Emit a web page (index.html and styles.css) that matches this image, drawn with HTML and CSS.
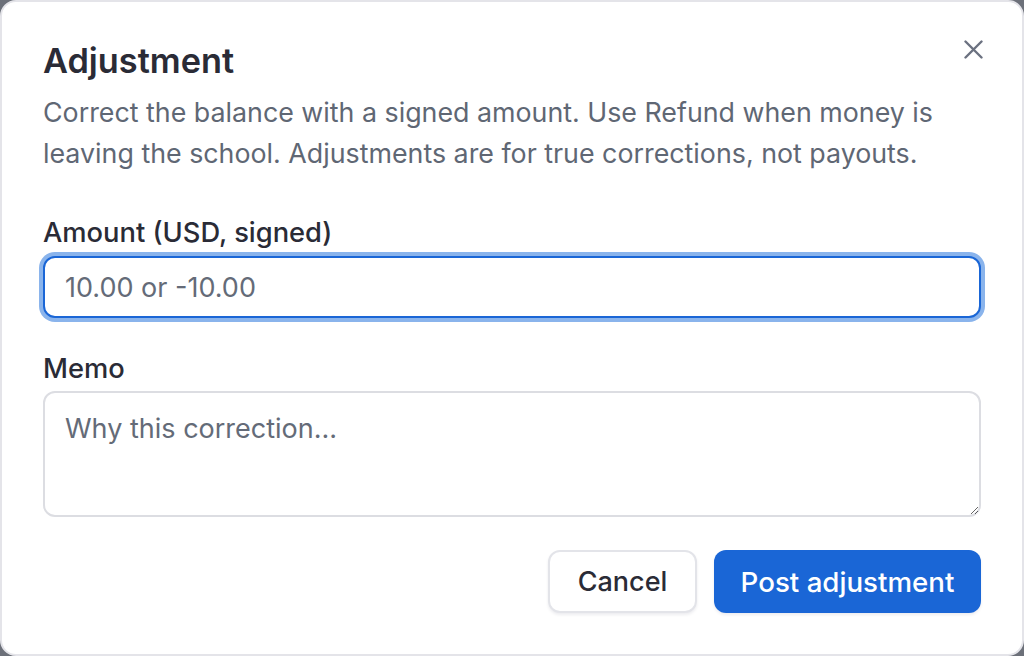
FILE: index.html
```html
<!DOCTYPE html>
<html lang="en">
<head>
<meta charset="utf-8">
<title>Adjustment</title>
<link rel="stylesheet" href="styles.css">
</head>
<body>
<div class="dialog" role="dialog" aria-labelledby="dlg-title">
  <button class="close" type="button" aria-label="Close">
    <svg viewBox="0 0 19 19" width="19" height="19" aria-hidden="true"><path d="M1.5 1.5 L17.5 17.5 M17.5 1.5 L1.5 17.5" stroke="currentColor" stroke-width="2.4" stroke-linecap="round" fill="none"/></svg>
  </button>
  <h1 id="dlg-title" class="title">Adjustment</h1>
  <p class="desc">Correct the balance with a signed amount. Use Refund when money is leaving the school. Adjustments are for true corrections, not payouts.</p>
  <label class="label" for="amount">Amount (USD, signed)</label>
  <input id="amount" class="input focused" type="text" placeholder="10.00 or -10.00">
  <label class="label label-memo" for="memo">Memo</label>
  <textarea id="memo" class="textarea" placeholder="Why this correction..."></textarea>
  <div class="actions">
    <button class="btn btn-secondary" type="button">Cancel</button>
    <button class="btn btn-primary" type="button">Post adjustment</button>
  </div>
</div>
</body>
</html>
```

FILE: styles.css
```css
* { box-sizing: border-box; }
html, body { margin: 0; padding: 0; }
body {
  background: #6c7079;
  font-family: Inter, "Noto Sans", "Liberation Sans", sans-serif;
  width: 1024px;
  height: 656px;
  overflow: hidden;
}
.dialog {
  position: relative;
  width: 1024px;
  height: 656px;
  background: #ffffff;
  border: 2px solid #e4e4e9;
  border-radius: 16px;
  padding: 39px 41px 0 41px;
  display: flex;
  flex-direction: column;
}
.close {
  position: absolute;
  top: 38px;
  right: 39px;
  width: 19px;
  height: 19px;
  padding: 0;
  border: 0;
  background: none;
  color: #6b7180;
  display: flex;
}
.close svg { width: 19px; height: 19px; display: block; }
.title {
  margin: 0;
  font-size: 34.3px;
  line-height: 40px;
  font-weight: 600;
  color: #2a2b36;
}
.desc {
  margin: 11px 0 0 0;
  font-size: 26.8px;
  line-height: 41px;
  color: #5f6774;
  font-weight: 400;
}
.label {
  display: block;
  margin-top: 43px;
  font-size: 27.3px;
  line-height: 32px;
  font-weight: 450;
  color: #2a2b36;
}
.label-memo { margin-top: 35px; }
.input {
  display: block;
  margin-top: 7px;
  width: 100%;
  height: 62px;
  border: 2px solid #d9dbe0;
  border-radius: 12px;
  padding: 0 20px;
  font-family: inherit;
  font-size: 27px;
  color: #2a2b36;
  outline: none;
}
.input.focused {
  border-color: #1a66d6;
  box-shadow: 0 0 0 4px #8ab4ec;
}
.input::placeholder, .textarea::placeholder { color: #646b78; opacity: 1; }
.textarea {
  display: block;
  margin-top: 6px;
  width: 100%;
  height: 126px;
  border: 2px solid #dcdde2;
  border-radius: 12px;
  padding: 20px 20px;
  font-family: inherit;
  font-size: 27px;
  line-height: 32px;
  color: #2a2b36;
  resize: vertical;
  outline: none;
}
.actions {
  margin-top: 33px;
  display: flex;
  justify-content: flex-end;
  gap: 17px;
}
.btn {
  height: 63px;
  border-radius: 12px;
  font-family: inherit;
  font-size: 27px;
  font-weight: 450;
  padding: 0 20px;
  box-shadow: 0 2px 3px rgba(20, 30, 60, 0.08);
}
.btn-secondary {
  width: 149px;
  background: #ffffff;
  border: 2px solid #e3e4e9;
  color: #2a2b36;
}
.btn-primary {
  width: 267px;
  background: #1a66d6;
  border: 0;
  color: #ffffff;
  font-size: 27.7px;
}
```
